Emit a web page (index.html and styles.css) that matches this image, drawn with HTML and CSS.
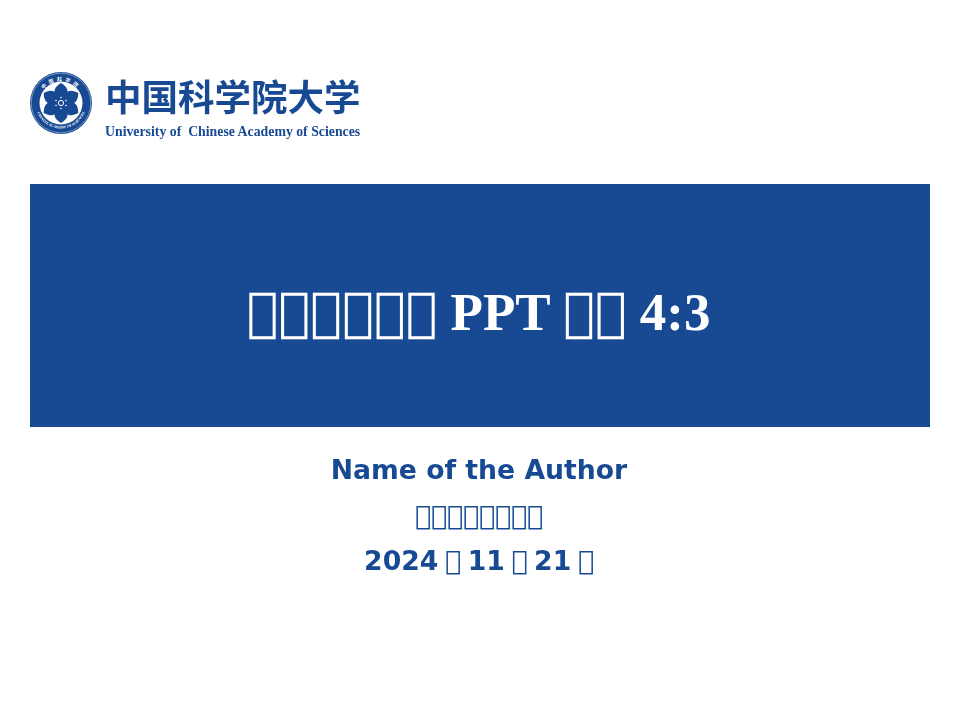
FILE: index.html

```html
<!DOCTYPE html>
<html lang="zh-CN">
<head>
  <meta charset="UTF-8" />
  <meta name="viewport" content="width=device-width, initial-scale=1.0"/>
  <title>PPT 4:3</title>
  <link rel="stylesheet" href="styles.css">
</head>
<body>
  <div class="slide">
    <header class="logo">
      <svg class="seal" viewBox="0 0 62 62" width="62" height="62" aria-hidden="true">
        <defs>
          <path id="sealTop" d="M9 31a22 22 0 0 1 44 0"/>
          <path id="sealBottom" d="M5.500 31a25.500 25.500 0 0 0 51 0"/>
          <path id="petal" d="M31 29c-3-2-6.500-5-6.500-9.500 0-4 3.500-6.500 6.500-8.500 3 2 6.500 4.500 6.500 8.500 0 4.500-3.500 7.500-6.500 9.500z"/>
        </defs>
        <circle cx="31" cy="31" r="31" fill="#184a94"/>
        <circle cx="31" cy="31" r="29.800" fill="none" stroke="#fff" stroke-width=".4"/>
        <circle cx="31" cy="31" r="21.500" fill="#fff"/>
        <use href="#petal" fill="#184a94"/>
        <use href="#petal" fill="#184a94" transform="rotate(60 31 31)"/>
        <use href="#petal" fill="#184a94" transform="rotate(120 31 31)"/>
        <use href="#petal" fill="#184a94" transform="rotate(180 31 31)"/>
        <use href="#petal" fill="#184a94" transform="rotate(240 31 31)"/>
        <use href="#petal" fill="#184a94" transform="rotate(300 31 31)"/>
        <circle cx="31" cy="31" r="7" fill="#184a94"/>
        <circle cx="31" cy="31" r="2.600" fill="none" stroke="#fff" stroke-width="1"/>
        <circle cx="31" cy="25.500" r=".8" fill="#fff"/>
        <circle cx="36" cy="28.500" r=".8" fill="#fff"/>
        <circle cx="36" cy="33.500" r=".8" fill="#fff"/>
        <circle cx="31" cy="36.500" r=".8" fill="#fff"/>
        <circle cx="26" cy="33.500" r=".8" fill="#fff"/>
        <circle cx="26" cy="28.500" r=".8" fill="#fff"/>
        <text class="seal-top"><textPath href="#sealTop" startOffset="50%">中国科学院</textPath></text>
        <text class="seal-bottom"><textPath href="#sealBottom" startOffset="50%">CHINESE ACADEMY OF SCIENCES</textPath></text>
      </svg>
      <div class="wordmark">
        <div class="wordmark-zh">中国科学院大学</div>
        <div class="wordmark-en">University of&nbsp; Chinese Academy of Sciences</div>
      </div>
    </header>

    <section class="banner">
      <h1><span class="tofu">&#xE000;&#xE001;&#xE002;&#xE003;&#xE004;&#xE005;</span> PPT <span class="tofu">&#xE006;&#xE007;</span> 4:3</h1>
    </section>

    <section class="meta">
      <p class="author">Name of the Author</p>
      <p class="school">&#xE010;&#xE011;&#xE012;&#xE013;&#xE014;&#xE015;&#xE016;&#xE017;</p>
      <p class="date">2024 &#xE020; 11 &#xE021; 21 &#xE022;</p>
    </section>
  </div>
</body>
</html>
```

FILE: styles.css

```css
* {
  margin: 0;
  padding: 0;
  box-sizing: border-box;
}

body {
  background-color: white;
  color: #184a94;
  font-family: "DejaVu Sans", sans-serif;
}

.slide {
  width: 960px;
  height: 720px;
  padding: 68px 30px 0;
  overflow: hidden;
  will-change: opacity;
}

.logo {
  display: flex;
  align-items: flex-start;
  gap: 13px;
  height: 116px;
}

.seal {
  margin-top: 4px;
  flex: none;
}

.seal-top {
  font-family: "Noto Sans CJK SC", sans-serif;
  font-size: 5px;
  font-weight: 700;
  fill: white;
  text-anchor: middle;
  letter-spacing: 3px;
}

.seal-bottom {
  font-family: "Liberation Serif", serif;
  font-size: 3.600px;
  font-weight: 700;
  fill: white;
  text-anchor: middle;
}

.wordmark-zh {
  font-family: "Noto Sans CJK SC", sans-serif;
  font-size: 36.500px;
  font-weight: 700;
  line-height: 55px;
  white-space: nowrap;
}

.wordmark-en {
  font-family: "Liberation Serif", serif;
  font-size: 13.800px;
  font-weight: 700;
  line-height: 18px;
  white-space: nowrap;
}

.banner {
  display: flex;
  align-items: center;
  justify-content: center;
  height: 243px;
  padding: 10px 3px 0 0;
  background-color: #184a94;
}

h1 {
  color: white;
  font-family: "Liberation Serif", serif;
  font-size: 53px;
  font-weight: 700;
  white-space: nowrap;
}

.tofu {
  font-family: "DejaVu Serif", serif;
}

.meta {
  padding: 24px 2px 0 0;
  text-align: center;
  font-size: 26.670px;
  font-weight: 700;
  line-height: 38px;
}

.author {
  margin-bottom: 8px;
}

.school {
  margin-bottom: 7px;
  font-weight: 400;
}

.date {
  word-spacing: -2.600px;
}
```
